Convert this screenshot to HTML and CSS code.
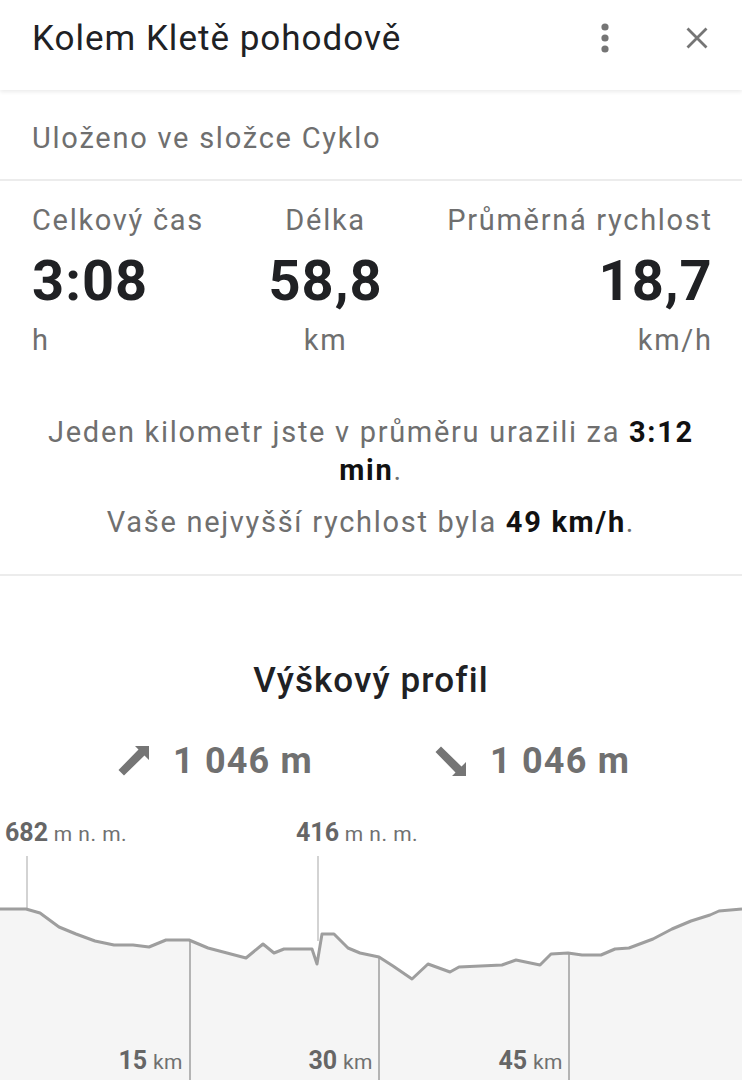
FILE: index.html
```html
<!DOCTYPE html>
<html lang="cs">

<head>
  <meta charset="UTF-8">
  <meta name="viewport" content="width=device-width, initial-scale=1.0">
  <title>Kolem Kletě pohodově</title>
  <link rel="stylesheet" href="styles.css">
</head>

<body>
  <header class="topbar">
    <h1 class="title">Kolem Kletě pohodově</h1>
    <div class="actions">
      <svg class="icon-more" width="12" height="32" viewBox="0 0 12 32">
        <circle cx="6" cy="5" r="3.6" />
        <circle cx="6" cy="16" r="3.6" />
        <circle cx="6" cy="27" r="3.6" />
      </svg>
      <svg class="icon-close" width="22" height="22" viewBox="0 0 22 22">
        <path d="M1.5 1.5L20.5 20.5M20.5 1.5L1.5 20.5" />
      </svg>
    </div>
  </header>

  <div class="folder">Uloženo ve složce Cyklo</div>

  <section class="stats">
    <div class="stat stat-left">
      <div class="stat-label">Celkový čas</div>
      <div class="stat-value">3:08</div>
      <div class="stat-unit">h</div>
    </div>
    <div class="stat stat-mid">
      <div class="stat-label">Délka</div>
      <div class="stat-value">58,8</div>
      <div class="stat-unit">km</div>
    </div>
    <div class="stat stat-right">
      <div class="stat-label">Průměrná rychlost</div>
      <div class="stat-value">18,7</div>
      <div class="stat-unit">km/h</div>
    </div>
  </section>

  <section class="summary">
    <p>Jeden kilometr jste v průměru urazili za <b>3:12</b> <b>min</b>.</p>
    <p>Vaše nejvyšší rychlost byla <b>49 km/h</b>.</p>
  </section>

  <section class="profile">
    <h2 class="profile-title">Výškový profil</h2>
    <div class="climb">
      <div class="climb-item">
        <svg class="arrow" width="31" height="30" viewBox="-1 0 31 30">
          <path d="M16 0H30V14L25.5 9.5L5 29.5L-0.5 24L19.5 3.5Z" />
        </svg>
        <span>1 046 m</span>
      </div>
      <div class="climb-item">
        <svg class="arrow" width="31" height="30" viewBox="-1 0 31 30">
          <path d="M16 30H30V16L25.5 20.5L5 0.5L-0.5 6L19.5 26.5Z" />
        </svg>
        <span>1 046 m</span>
      </div>
    </div>

    <div class="chart">
      <svg class="chart-svg" width="742" height="290" viewBox="0 0 742 290">
        <path class="area" d="M0 108 L26 108 L40 112 L59 126 L76 133 L95 140 L114 144 L133 144 L149 146 L166 139 L189 139 L208 147 L246 157 L263 143 L274 152 L284 148 L312 148 L317 163 L322 133 L334 133 L348 147 L360 152 L379 156 L393 165 L412 178 L428 163 L450 171 L459 166 L502 164 L516 159 L540 164 L551 153 L568 152 L582 154 L601 154 L615 148 L629 147 L653 138 L672 128 L691 120 L710 114 L719 110 L742 108 L742 290 L0 290 Z" />
        <line class="tick-top" x1="27" y1="55" x2="27" y2="108" />
        <line class="tick-top" x1="318" y1="55" x2="318" y2="140" />
        <line class="tick-km" x1="190" y1="139" x2="190" y2="290" />
        <line class="tick-km" x1="379" y1="156" x2="379" y2="290" />
        <line class="tick-km" x1="569" y1="152" x2="569" y2="290" />
        <path class="line" d="M0 108 L26 108 L40 112 L59 126 L76 133 L95 140 L114 144 L133 144 L149 146 L166 139 L189 139 L208 147 L246 157 L263 143 L274 152 L284 148 L312 148 L317 163 L322 133 L334 133 L348 147 L360 152 L379 156 L393 165 L412 178 L428 163 L450 171 L459 166 L502 164 L516 159 L540 164 L551 153 L568 152 L582 154 L601 154 L615 148 L629 147 L653 138 L672 128 L691 120 L710 114 L719 110 L742 108" />
      </svg>
      <div class="mark mark-high"><b>682</b> m n. m.</div>
      <div class="mark mark-low"><b>416</b> m n. m.</div>
      <div class="km km-15"><b>15</b> km</div>
      <div class="km km-30"><b>30</b> km</div>
      <div class="km km-45"><b>45</b> km</div>
    </div>
  </section>
</body>

</html>
```

FILE: styles.css
```css
* {
  box-sizing: border-box;
}

body {
  margin: 0;
  background-color: #fff;
  font-family: Roboto, "Noto Sans", sans-serif;
  color: #202124;
  overflow: hidden;
}

.topbar {
  height: 90px;
  padding: 0 34px 0 32px;
  display: flex;
  align-items: center;
  justify-content: space-between;
  box-shadow: 0 2px 4px rgba(0, 0, 0, .08);
  position: relative;
}

.topbar .title {
  margin: 0 0 14px;
  font-size: 35px;
  font-weight: 400;
  letter-spacing: 1px;
  color: #202124;
}

.topbar .actions {
  display: flex;
  align-items: center;
  gap: 75px;
  margin-bottom: 14px;
}

.icon-more {
  fill: #757575;
}

.icon-close {
  stroke: #757575;
  stroke-width: 2.8;
  fill: none;
}

.folder {
  height: 91px;
  padding: 6px 32px 0;
  display: flex;
  align-items: center;
  font-size: 29px;
  letter-spacing: 1.75px;
  color: #6f6f6f;
  border-bottom: 2px solid #ececec;
}

.stats {
  padding: 21px 31px 0 32px;
  display: flex;
  justify-content: space-between;
  font-size: 29px;
  letter-spacing: 1.7px;
  color: #6f6f6f;
}

.stat-label,
.stat-unit {
  line-height: 36px;
}

.stat-value {
  margin-top: 13px;
  font-size: 56px;
  line-height: 60px;
  font-weight: 700;
  letter-spacing: 1px;
  color: #202124;
}

.stat-unit {
  margin-top: 11px;
}

.stat-mid {
  text-align: center;
}

.stat-right {
  text-align: right;
}

.stat-right .stat-label,
.stat-right .stat-value,
.stat-right .stat-unit {
  margin-right: -1.7px;
}

.summary {
  padding: 55px 24px 33px;
  text-align: center;
  font-size: 29px;
  line-height: 38px;
  letter-spacing: 1.7px;
  color: #6f6f6f;
  border-bottom: 2px solid #ececec;
}

.summary p {
  margin: 0;
}

.summary p + p {
  margin-top: 14px;
}

.summary b {
  font-weight: 700;
  color: #111;
}

.profile-title {
  margin: 85px 0 0;
  text-align: center;
  font-size: 35px;
  line-height: 40px;
  font-weight: 500;
  letter-spacing: 1.1px;
  color: #202124;
}

.climb {
  margin-top: 38px;
  padding-left: 6px;
  display: flex;
  justify-content: center;
  gap: 122px;
  font-size: 36px;
  line-height: 44px;
  font-weight: 700;
  letter-spacing: 1.2px;
  color: #707070;
}

.climb-item {
  display: flex;
  align-items: center;
  gap: 24px;
}

.arrow {
  fill: #757575;
}

.chart {
  margin-top: 18px;
  height: 290px;
  position: relative;
}

.chart-svg {
  display: block;
}

.chart .area {
  fill: #f5f5f5;
}

.chart .line {
  fill: none;
  stroke: #9e9e9e;
  stroke-width: 3;
  stroke-linejoin: round;
}

.chart .tick-top {
  stroke: #c4c4c4;
  stroke-width: 1.5;
}

.chart .tick-km {
  stroke: #9e9e9e;
  stroke-width: 1.5;
}

.mark,
.km {
  position: absolute;
  font-size: 21px;
  line-height: 30px;
  letter-spacing: .5px;
  color: #707070;
  white-space: nowrap;
}

.mark b,
.km b {
  font-size: 25px;
  font-weight: 700;
  letter-spacing: 0;
  color: #666;
}

.mark {
  top: 17px;
}

.mark-high {
  left: 5px;
}

.mark-low {
  left: 296px;
}

.km {
  top: 245px;
}

.km-15 {
  right: 559px;
}

.km-30 {
  right: 369px;
}

.km-45 {
  right: 179px;
}
```
